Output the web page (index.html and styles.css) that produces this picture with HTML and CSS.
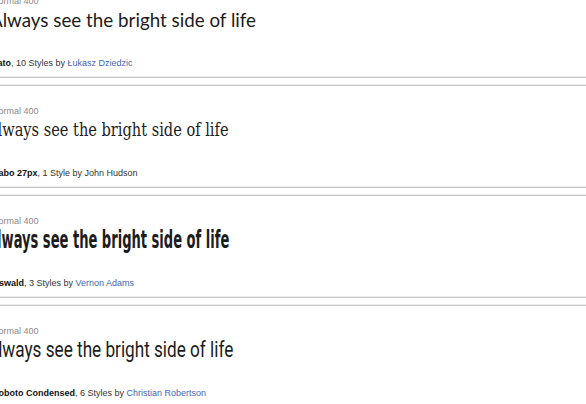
FILE: index.html
```html
<!DOCTYPE html>
<html lang="en">
<head>
  <meta charset="UTF-8">
  <meta name="viewport" content="width=device-width, initial-scale=1">
  <title>Font list</title>
  <link rel="stylesheet" href="styles.css">
</head>
<body>
  <div class="list">

    <div class="card">
      <div class="style-name">Normal 400</div>
      <div class="sample sample-lato"><span>Always see the bright side of life</span></div>
      <div class="meta"><b>Lato</b>, 10 Styles by <a href="#">Łukasz Dziedzic</a></div>
    </div>

    <div class="card">
      <div class="style-name">Normal 400</div>
      <div class="sample sample-serif"><span>Always see the bright side of life</span></div>
      <div class="meta"><b>Habo 27px</b>, 1 Style by John Hudson</div>
    </div>

    <div class="card">
      <div class="style-name">Normal 400</div>
      <div class="sample sample-oswald"><span>Always see the bright side of life</span></div>
      <div class="meta"><b>Oswald</b>, 3 Styles by <a href="#">Vernon Adams</a></div>
    </div>

    <div class="card">
      <div class="style-name">Normal 400</div>
      <div class="sample sample-condensed"><span>Always see the bright side of life</span></div>
      <div class="meta"><b>Roboto Condensed</b>, 6 Styles by <a href="#">Christian Robertson</a></div>
    </div>

  </div>
</body>
</html>
```

FILE: styles.css
```css
:root {
  --line: #c4c4c4;
  --line-soft: #efefef;
  --ink: #1c1c1c;
  --muted: #8a8a8a;
  --link: #4467b3;
}

body {
  margin: 0;
  background: #fff;
  overflow: hidden;
  font-family: 'Liberation Sans', Arial, sans-serif;
}

.list {
  margin: -25px 0 0 -8px;
}

.card {
  border-top: 1px solid var(--line);
  border-bottom: 1px solid var(--line);
  box-shadow: 0 -1px 0 var(--line-soft), inset 0 -1px 0 var(--line-soft);
  margin-bottom: 7px;
  padding: 18px 0 7px;
}

.style-name {
  font-size: 9px;
  line-height: 14px;
  color: var(--muted);
}

.sample {
  height: 24px;
  line-height: 24px;
  margin: 0 0 24px -5px;
  color: var(--ink);
  white-space: nowrap;
}

.sample span {
  display: inline-block;
  transform-origin: left center;
}

.sample-lato {
  margin-left: -2px;
  font-family: Lato, sans-serif;
  font-size: 18.8px;
}

.sample-serif {
  font-family: 'DejaVu Serif Condensed', 'DejaVu Serif', serif;
  font-size: 18px;
}

.sample-serif span {
  transform: scaleX(0.9);
}

.sample-oswald {
  font-family: 'DejaVu Sans Condensed', 'DejaVu Sans', sans-serif;
  font-weight: bold;
  font-size: 24px;
}

.sample-oswald span {
  transform: scaleX(0.605);
}

.sample-condensed {
  font-family: Roboto, sans-serif;
  font-size: 22px;
}

.sample-condensed span {
  transform: scaleX(0.78);
}

.meta {
  font-size: 9px;
  line-height: 14px;
  color: #333;
}

.meta b {
  color: #111;
}

.meta a {
  color: var(--link);
  text-decoration: none;
}
```
